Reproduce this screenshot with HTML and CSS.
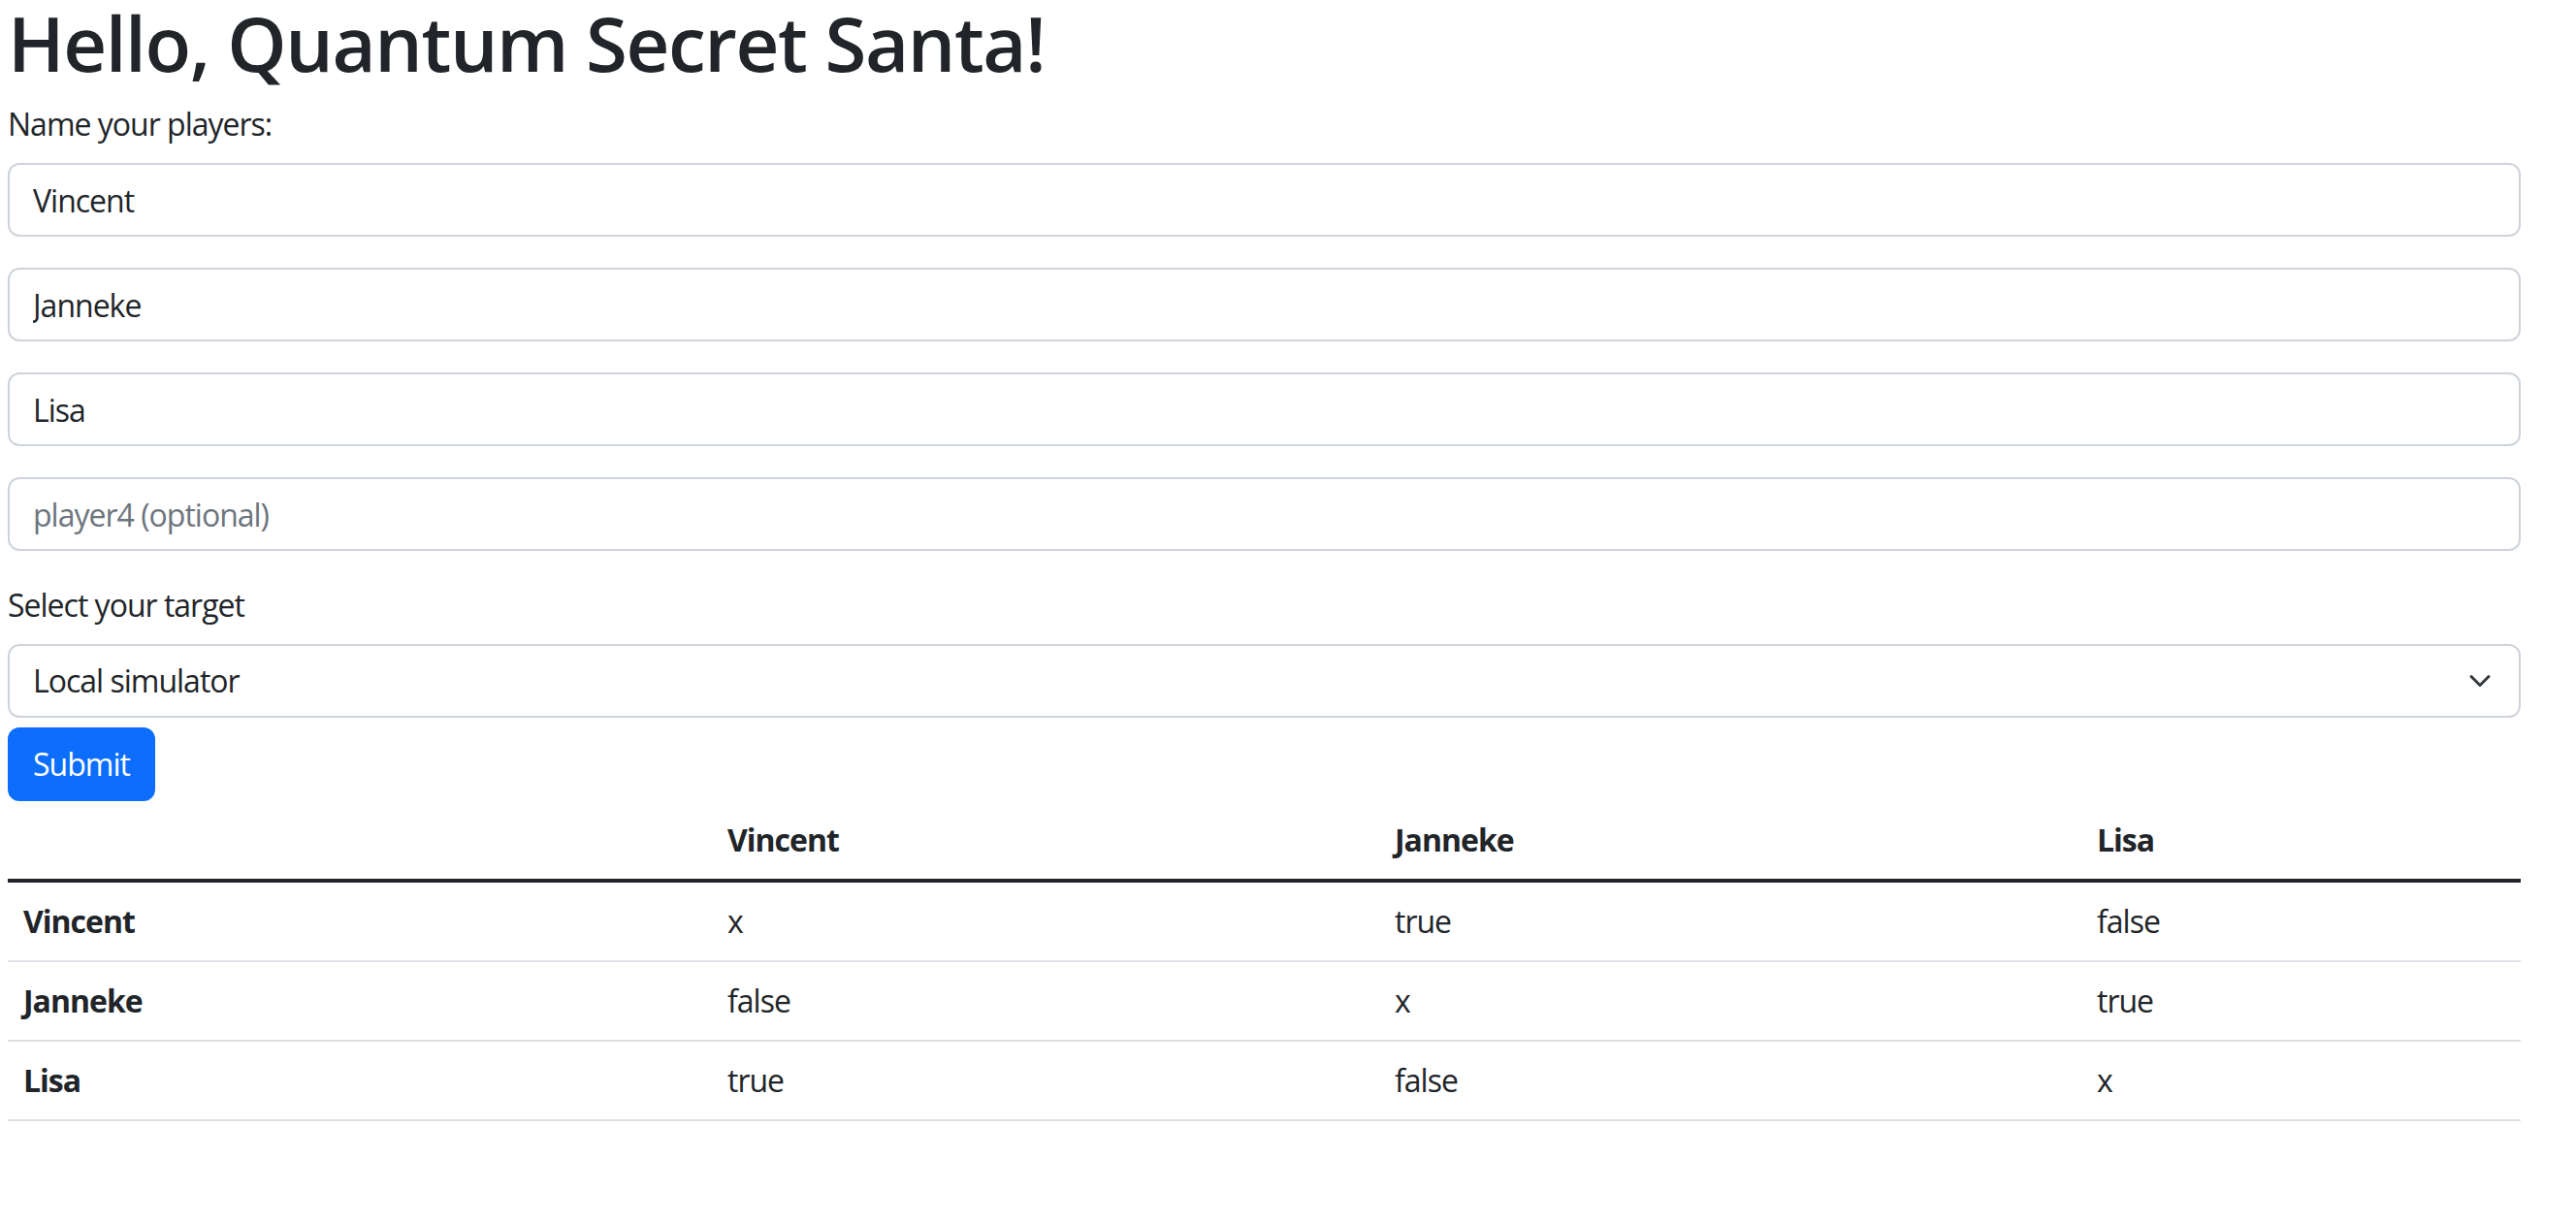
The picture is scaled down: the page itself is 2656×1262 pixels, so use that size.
FILE: index.html
```html
<!DOCTYPE html>
<html lang="en">
<head>
<meta charset="utf-8">
<title>Quantum Secret Santa</title>
<link rel="stylesheet" href="styles.css">
</head>
<body>
<main class="page">
  <h1 class="title">Hello, Quantum Secret Santa!</h1>
  <form class="players-form">
    <label class="form-label">Name your players:</label>
    <input class="form-control" type="text" value="Vincent">
    <input class="form-control" type="text" value="Janneke">
    <input class="form-control" type="text" value="Lisa">
    <input class="form-control" type="text" placeholder="player4 (optional)">
    <label class="form-label">Select your target</label>
    <div class="select-wrap">
      <select class="form-select">
        <option>Local simulator</option>
      </select>
      <svg class="select-arrow" viewBox="0 0 16 16" width="24" height="24" aria-hidden="true">
        <path d="M2 5l6 6 6-6" fill="none" stroke="#343a40" stroke-width="2" stroke-linecap="round" stroke-linejoin="round"/>
      </svg>
    </div>
    <button class="btn-primary" type="button">Submit</button>
  </form>
  <table class="result-table">
    <thead>
      <tr><th class="c1"></th><th class="c2">Vincent</th><th class="c3">Janneke</th><th class="c4">Lisa</th></tr>
    </thead>
    <tbody>
      <tr><th>Vincent</th><td>x</td><td>true</td><td>false</td></tr>
      <tr><th>Janneke</th><td>false</td><td>x</td><td>true</td></tr>
      <tr><th>Lisa</th><td>true</td><td>false</td><td>x</td></tr>
    </tbody>
  </table>
</main>
</body>
</html>
```
FILE: styles.css
```css
* { box-sizing: border-box; }
html, body { margin: 0; padding: 0; background: #fff; }
body {
  font-family: "Open Sans", "Noto Sans", sans-serif;
  font-size: 32px;
  line-height: 48px;
  letter-spacing: -1px;
  color: #212529;
}
.page {
  margin: 0 57px 0 8px;
}
.title {
  font-size: 78px;
  font-weight: 600;
  letter-spacing: -1.4px;
  line-height: 88px;
  margin: 0 0 16px;
}
.players-form { display: flex; flex-direction: column; align-items: stretch; }
.form-label {
  display: block;
  margin-bottom: 16px;
  font-size: 32px;
  line-height: 48px;
}
.form-control, .form-select {
  display: block;
  width: 100%;
  height: 76px;
  padding: 12px 24px;
  font-family: inherit;
  font-size: 32px;
  line-height: 48px;
  letter-spacing: -1px;
  color: #212529;
  background: #fff;
  border: 2px solid #ced4da;
  border-radius: 12px;
  outline: none;
}
.form-control { margin-bottom: 32px; }
.form-control::placeholder { color: #6c757d; opacity: 1; }
.select-wrap { position: relative; }
.form-select {
  appearance: none;
  -webkit-appearance: none;
  padding-right: 72px;
}
.select-arrow {
  position: absolute;
  right: 30px;
  top: 26px;
  pointer-events: none;
}
.btn-primary {
  align-self: flex-start;
  margin-top: 10px;
  height: 76px;
  padding: 12px 24px;
  font-family: inherit;
  font-size: 32px;
  line-height: 48px;
  letter-spacing: -1px;
  color: #fff;
  background: #0d6efd;
  border: 2px solid #0d6efd;
  border-radius: 12px;
}
.result-table {
  width: 100%;
  border-collapse: collapse;
  table-layout: fixed;
}
.result-table th, .result-table td {
  padding: 16px;
  text-align: left;
  vertical-align: top;
  font-size: 32px;
  line-height: 48px;
}
.result-table th { font-weight: 700; }
.result-table td { font-weight: 400; }
.result-table thead th { border-bottom: 4px solid #212529; }
.result-table tbody th, .result-table tbody td { border-bottom: 2px solid #dee2e6; }
.c1 { width: 726px; }
.c2 { width: 688px; }
.c3 { width: 724px; }
.c4 { width: auto; }
```
